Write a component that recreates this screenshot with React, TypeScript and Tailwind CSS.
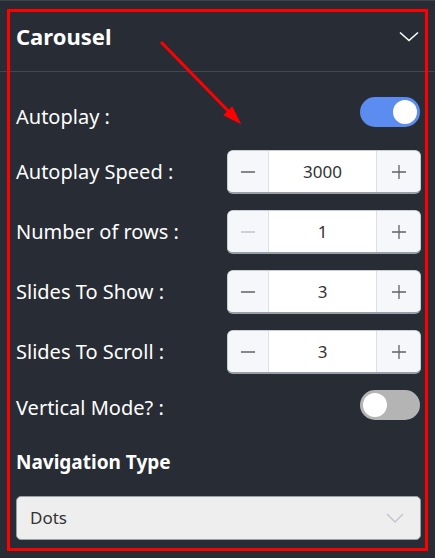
import React from "react";

const font = { fontFamily: '"Noto Sans", "Open Sans", sans-serif' };

function Minus({ disabled }: { disabled?: boolean }) {
  return (
    <svg width="16" height="16" viewBox="0 0 16 16">
      <path d="M1 8h14" stroke={disabled ? "#c0c4cc" : "#606266"} strokeWidth="1.3" />
    </svg>
  );
}
function Plus() {
  return (
    <svg width="16" height="16" viewBox="0 0 16 16">
      <path d="M1 8h14M8 1v14" stroke="#606266" strokeWidth="1.3" />
    </svg>
  );
}

function Stepper({ value, minDisabled }: { value: string; minDisabled?: boolean }) {
  return (
    <div className="flex h-[44px] w-[194px] overflow-hidden rounded-[6px] border border-[#c8ccd3] border-b-2 border-b-[#9a9ea6] bg-white">
      <div className="flex w-[41px] items-center justify-center border-r border-[#dcdfe6] bg-[#f5f7fa]">
        <Minus disabled={minDisabled} />
      </div>
      <div className="flex flex-1 items-center justify-center text-[17px] text-[#333]">{value}</div>
      <div className="flex w-[44px] items-center justify-center border-l border-[#dcdfe6] bg-[#f5f7fa]">
        <Plus />
      </div>
    </div>
  );
}

function Toggle({ on }: { on: boolean }) {
  return (
    <div
      className={
        on
          ? "flex h-[30px] w-[60px] items-center justify-end rounded-full bg-[#5a8def] px-[3px]"
          : "flex h-[30px] w-[60px] items-center justify-start rounded-full bg-[#b4b4b4] px-[3px]"
      }
    >
      <div className="h-[24px] w-[24px] rounded-full bg-white" />
    </div>
  );
}

function Row({
  label,
  children,
  h = "h-[44px]",
  labelCls = "",
}: {
  label: string;
  children: React.ReactNode;
  h?: string;
  labelCls?: string;
}) {
  return (
    <div className={"flex items-center justify-between " + h}>
      <span className={"text-[20px] text-white " + labelCls}>{label}</span>
      {children}
    </div>
  );
}

export default function App() {
  return (
    <div className="relative h-[558px] w-[435px] overflow-hidden border-t border-[#3d414a] bg-[#282c34]" style={font}>
      <div className="flex h-[71px] items-center justify-between border-b border-[#43474f] pl-[16px] pr-[16px]">
        <span className="text-[22px] font-bold text-white">Carousel</span>
        <svg width="20" height="11" viewBox="0 0 20 11">
          <path d="M1 1.5l9 8 9-8" fill="none" stroke="white" strokeWidth="1.6" />
        </svg>
      </div>
      <div className="flex flex-col gap-[16px] pl-[16px] pr-[14px] pt-[18px]">
        <Row label="Autoplay :" labelCls="pt-[10px]">
          <div className="pr-[1px]"><Toggle on /></div>
        </Row>
        <Row label="Autoplay Speed :"><Stepper value="3000" /></Row>
        <Row label="Number of rows :"><Stepper value="1" minDisabled /></Row>
        <Row label="Slides To Show :"><Stepper value="3" /></Row>
        <Row label="Slides To Scroll :"><Stepper value="3" /></Row>
        <Row label="Vertical Mode? :" h="h-[30px]" labelCls="pt-[6px]">
          <div className="pr-[1px]"><Toggle on={false} /></div>
        </Row>
        <div className="mt-[12px] text-[19px] font-bold text-white">Navigation Type</div>
        <div className="mt-[3px] flex h-[44px] items-center justify-between rounded-[5px] border border-[#9a9ea6] bg-[#eeeeee] pl-[13px] pr-[16px]">
          <span className="text-[17px] text-[#333]">Dots</span>
          <svg width="18" height="10" viewBox="0 0 18 10">
            <path d="M1 1l8 8 8-8" fill="none" stroke="#c0c4cc" strokeWidth="1.4" />
          </svg>
        </div>
      </div>
      <div className="pointer-events-none absolute left-[7px] top-[8px] h-[542px] w-[421px] border-[3px] border-[#ff0000]" />
      <svg className="pointer-events-none absolute left-0 top-0" width="435" height="558">
        <path d="M161 41 L236 118" stroke="#ff0000" strokeWidth="3" />
        <path d="M239 121 L225 114 L232 107 Z" fill="#ff0000" stroke="#ff0000" strokeWidth="2" />
      </svg>
    </div>
  );
}
